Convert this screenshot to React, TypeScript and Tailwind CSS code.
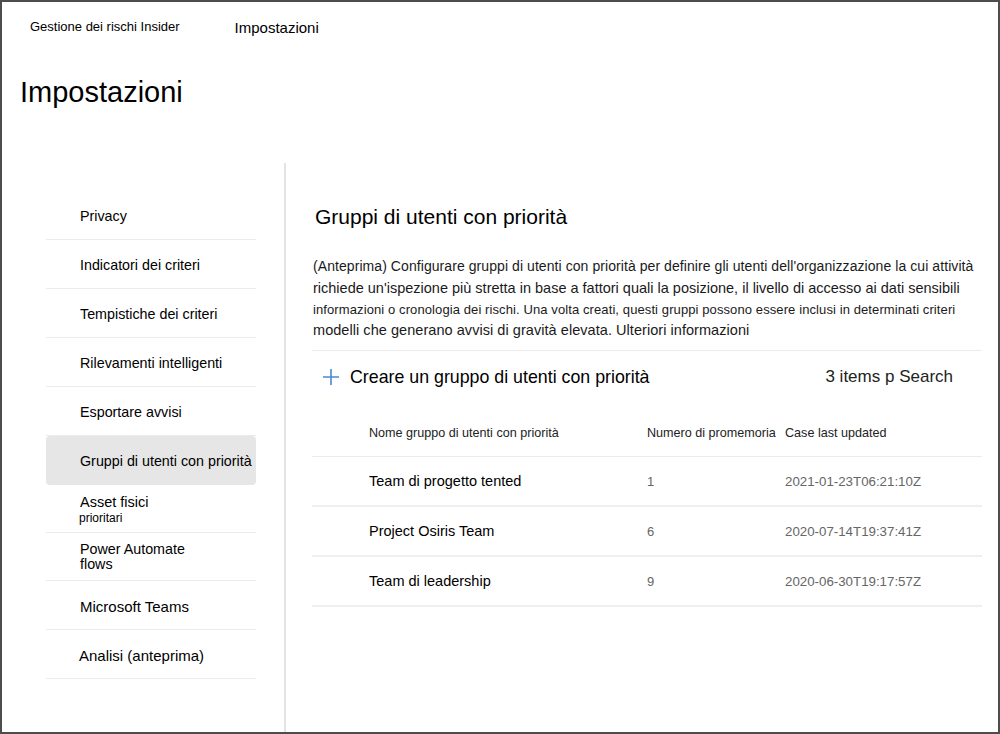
import React from 'react'

const navItems = [
  { label: 'Privacy' },
  { label: 'Indicatori dei criteri' },
  { label: 'Tempistiche dei criteri' },
  { label: 'Rilevamenti intelligenti' },
  { label: 'Esportare avvisi' },
  { label: 'Gruppi di utenti con priorità', active: true },
]

const rows = [
  { name: 'Team di progetto tented', count: '1', updated: '2021-01-23T06:21:10Z' },
  { name: 'Project Osiris Team', count: '6', updated: '2020-07-14T19:37:41Z' },
  { name: 'Team di leadership', count: '9', updated: '2020-06-30T19:17:57Z' },
]

function PlusIcon() {
  return (
    <svg width="18" height="18" viewBox="0 0 18 18" className="shrink-0">
      <path d="M9 1v16M1 9h16" stroke="#4a8ad4" strokeWidth="1.6" fill="none" />
    </svg>
  )
}

function Sidebar() {
  return (
    <div className="w-[282px] shrink-0 pl-[44px] pt-[28px]">
      <ul className="w-[210px]">
        {navItems.map((item) => (
          <li
            key={item.label}
            className={`h-[49px] flex items-center pt-1 pl-[34px] text-[14.3px] text-black border-b border-[#ebebeb] ${
              item.active ? 'bg-[#e6e6e6] rounded-sm border-transparent' : ''
            }`}
          >
            {item.label}
          </li>
        ))}
        <li className="h-[48px] flex flex-col justify-center pl-[34px] pt-[2px] border-b border-[#ebebeb] leading-none">
          <span className="text-[14.5px] text-black">Asset fisici</span>
          <span className="text-[12px] text-black mt-[3px] -ml-px">prioritari</span>
        </li>
        <li className="h-[48px] flex flex-col justify-center pl-[34px] border-b border-[#ebebeb] text-[14.3px] leading-[15px] text-black">
          <span>Power Automate</span>
          <span>flows</span>
        </li>
        <li className="h-[49px] flex items-center pt-1 pl-[34px] text-[15px] text-black border-b border-[#ebebeb]">
          Microsoft Teams
        </li>
        <li className="h-[49px] flex items-center pt-1 pl-[33px] text-[15px] text-black border-b border-[#ebebeb]">
          Analisi (anteprima)
        </li>
      </ul>
    </div>
  )
}

function Content() {
  return (
    <div className="flex-1 border-l-2 border-[#e3e3e3] pl-[26px] pr-[16px]">
      <div className="w-[670px]">
        <h2 className="pt-[40px] pl-[3px] text-[21px] leading-[28px] text-black">Gruppi di utenti con priorità</h2>
        <div className="mt-[24px] pl-px text-[#1a1a1a] whitespace-nowrap">
          <p className="text-[14px] leading-[22px] tracking-[0.07px]">
            (Anteprima) Configurare gruppi di utenti con priorità per definire gli utenti dell'organizzazione la cui attività
          </p>
          <p className="text-[14.5px] leading-[22px]">
            richiede un'ispezione più stretta in base a fattori quali la posizione, il livello di accesso ai dati sensibili
          </p>
          <p className="text-[13px] leading-[22px] tracking-[0.1px]">
            informazioni o cronologia dei rischi. Una volta creati, questi gruppi possono essere inclusi in determinati criteri
          </p>
          <p className="text-[14.5px] leading-[18px] tracking-[0.05px]">
            modelli che generano avvisi di gravità elevata. Ulteriori informazioni
          </p>
        </div>
        <div className="mt-[11px] border-t border-[#ebebeb]" />
        <div className="h-[52px] flex items-center justify-between pl-[10px] pr-[29px]">
          <div className="flex items-center gap-[10px]">
            <PlusIcon />
            <span className="text-[17.8px] text-black">Creare un gruppo di utenti con priorità</span>
          </div>
          <span className="text-[17px] text-[#222]">3 items p Search</span>
        </div>
        <div className="h-[54px] pt-[7px] flex items-center border-b border-[#ebebeb] text-[12.6px] text-[#222]">
          <div className="w-[335px] pl-[57px]">Nome gruppo di utenti con priorità</div>
          <div className="w-[138px]">Numero di promemoria</div>
          <div>Case last updated</div>
        </div>
        {rows.map((r) => (
          <div key={r.name} className="h-[50px] flex items-center pt-px border-b-2 border-[#efefef]">
            <div className="w-[335px] pl-[57px] text-[14.5px] text-black">{r.name}</div>
            <div className="w-[138px] text-[13px] text-[#666]">{r.count}</div>
            <div className="text-[13.3px] text-[#666]">{r.updated}</div>
          </div>
        ))}
      </div>
    </div>
  )
}

export default function App() {
  return (
    <div
      className="w-[1000px] h-[734px] border-2 border-[#4d4d4d] bg-white overflow-hidden flex flex-col"
      style={{ fontFamily: '"Liberation Sans", Arial, sans-serif' }}
    >
      <div className="h-[48px] flex items-center pt-[2px]">
        <span className="ml-[28px] text-[13px] text-black">Gestione dei rischi Insider</span>
        <span className="ml-[55px] text-[15px] text-black mt-[3px]">Impostazioni</span>
      </div>
      <div className="h-[86px] pl-[18px] pt-[25px]">
        <h1 className="text-[29px] leading-[34px] text-black">Impostazioni</h1>
      </div>
      <div className="h-[27px]" />
      <div className="flex flex-1">
        <Sidebar />
        <Content />
      </div>
    </div>
  )
}
